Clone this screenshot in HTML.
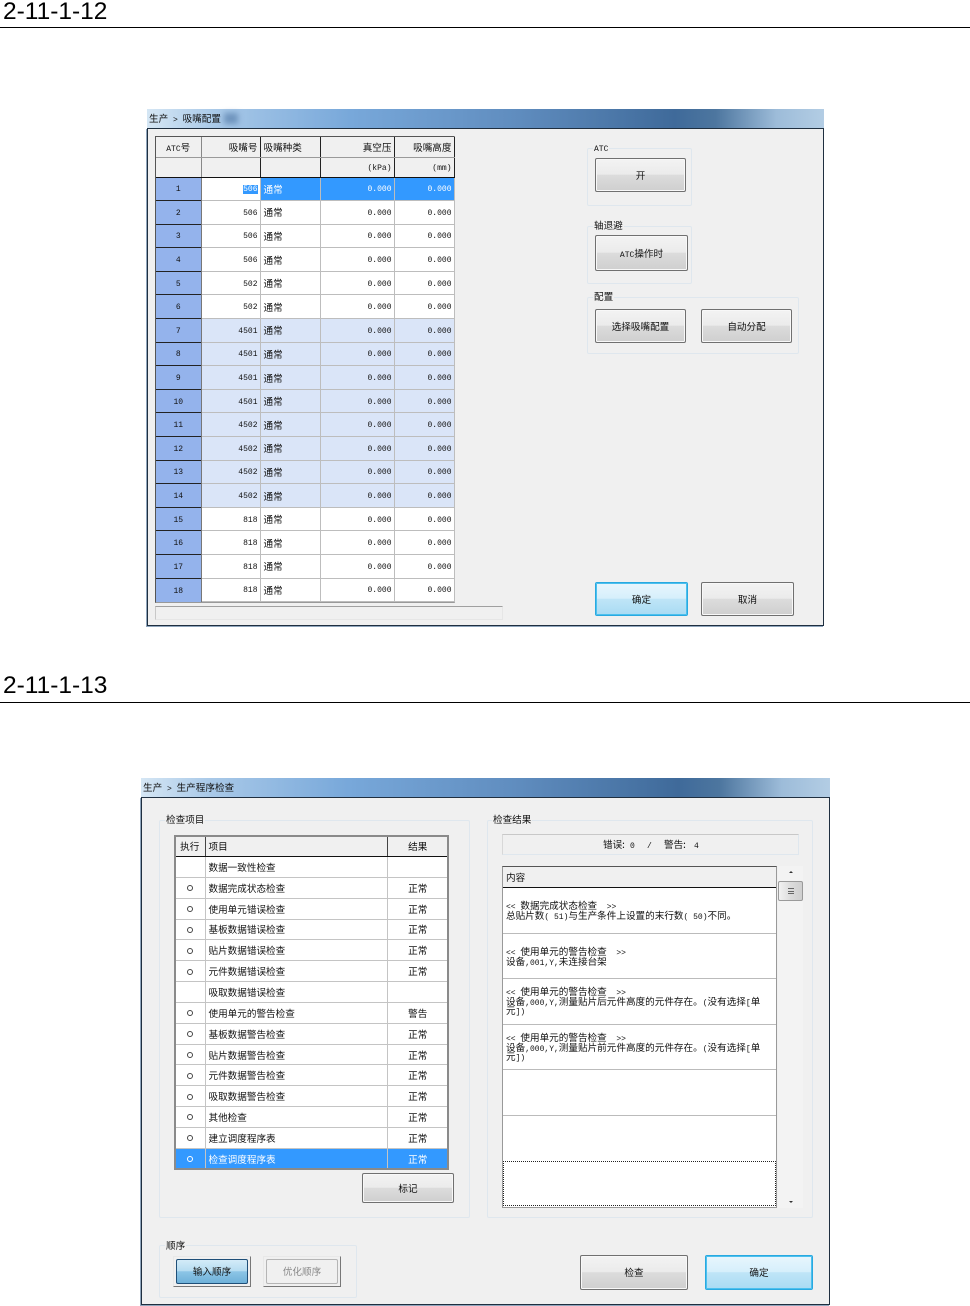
<!DOCTYPE html>
<html lang="zh">
<head>
<meta charset="utf-8">
<title>2-11-1</title>
<style>
html,body{margin:0;padding:0;background:#fff}
body{position:relative;width:970px;height:1306px;overflow:hidden;font-family:"Liberation Sans","Noto Sans CJK SC",sans-serif;color:#111}
.a{position:absolute;box-sizing:border-box}
.h{position:absolute;left:3px;font:24.5px/28px "Liberation Sans",sans-serif;color:#000}
.rule{position:absolute;left:0;width:970px;height:1px;background:#000}
.tb{position:absolute;box-sizing:border-box;background:linear-gradient(90deg,#d5e6f4 0,#a9c9e8 10%,#78a8da 30%,#5f8cbe 55%,#3f6a9a 78%,#4d769f 84%,#9dbcd9 93%,#b3cde4 100%)}
.win{position:absolute;box-sizing:border-box;background:#f0f0f0;border:1px solid #1f2f40;box-shadow:-1px 1px 0 #8fa5bc}
.t{position:absolute;white-space:nowrap;font-family:"Noto Sans CJK SC",sans-serif;font-size:9.6px;line-height:12px;color:#111}
.m{font-family:"Liberation Mono",monospace;font-size:8px;line-height:0}
.g{position:absolute;box-sizing:border-box;border:1px solid #dfe7ee;border-radius:2px}
.lb{position:absolute;background:#f0f0f0;padding:0 1px;white-space:nowrap;font-family:"Noto Sans CJK SC",sans-serif;font-size:9.6px;line-height:12px;color:#111}
.b{position:absolute;box-sizing:border-box;border:1px solid #707070;border-radius:2px;background:linear-gradient(#f3f3f3 0,#ebebeb 48%,#dcdcdc 50%,#cfcfcf 100%);text-align:center;font-family:"Noto Sans CJK SC",sans-serif;font-size:9.6px;color:#111;box-shadow:inset 0 0 0 1px #f8f8f8}
.bb{border:1px solid #29a9e0;background:linear-gradient(#e8f6fd 0,#d6effb 48%,#bfe5f7 50%,#a9dbf3 100%);box-shadow:inset 0 0 0 1px #4cc0ee}
table{position:absolute;border-collapse:collapse;table-layout:fixed;font-family:"Noto Sans CJK SC",sans-serif;font-size:9.6px;color:#111;background:#fff}
td{padding:0;overflow:hidden;white-space:nowrap;box-sizing:border-box;line-height:10px}
#t1{left:156px;top:137px;width:298px}
#t1 td{border-right:1px solid #bdbdbd;border-bottom:1px solid #bdbdbd}
#t1 tr.hd td{background:#f0f0f0;border-right:1px solid #222;border-bottom:1px solid #9a9a9a}
#t1 tr.hd2 td{background:#f0f0f0;border-right:1px solid #222;border-bottom:1px solid #111}
#t1 tr.hd td:first-child,#t1 tr.hd2 td:first-child{border-right:1px solid #888}
#t1 tr.r td{height:23.6px}
#t1 td.n{background:#94b3ec;text-align:center;border-right:1px solid #777;border-top:1px solid #222;border-bottom:0;font-family:"Liberation Mono",monospace;font-size:8px;padding-top:3px}
#t1 .rt{text-align:right;padding-right:2px}
#t1 .lf{padding-left:3px}
#t1 .v{font-family:"Liberation Mono",monospace;font-size:8px;padding-top:3px}
#t1 tr.s td:not(.n){background:#3399ff;color:#fff}
#t1 tr.s td.e{background:#fff;color:#fff}
#t1 tr.l td:not(.n){background:#dae5f8}
#t2{left:175px;top:836px;width:273px}
#t2 td{height:20.85px;border-right:1px solid #c4c4c4;border-bottom:1px solid #c4c4c4}
#t2 tr.hd td{height:20.5px;background:#f0f0f0;border-bottom:1px solid #111;border-right:1px solid #444}
#t2 td:nth-child(1){text-align:center}
#t2 td:nth-child(2){padding-left:3px}
#t2 td:nth-child(3){text-align:center;border-right:0}
#t2 tr.hd td:nth-child(3){border-right:0}
#t2 tr.s td{background:#3399ff;color:#fff}
.o{display:inline-block;width:6px;height:6px;border:1px solid #444;border-radius:50%;vertical-align:middle;box-sizing:border-box;position:relative;top:-1px}
tr.s .o{border-color:#fff}
</style>
</head>
<body>

<div class="h" style="top:-2px">2-11-1-12</div>
<div class="rule" style="top:27px"></div>

<div class="tb" style="left:147px;top:109px;width:677px;height:19px"></div>
<div class="t" style="left:149px;top:112px">生产<span class="m">&nbsp;&gt;&nbsp;</span>吸嘴配置</div>
<div class="a" style="left:224px;top:113px;width:14px;height:11px;background:#6f94bd;filter:blur(3px)"></div>
<div class="win" style="left:147px;top:128px;width:677px;height:498px"></div>

<div class="a" style="left:155px;top:136px;width:300px;height:467px;border:1px solid #555;border-right-color:#bbb;border-bottom-color:#999"></div>
<table id="t1">
<colgroup><col style="width:45px"><col style="width:59px"><col style="width:60px"><col style="width:74px"><col style="width:60px"></colgroup>
<tr class="hd" style="height:20px"><td style="text-align:center"><span class="m">ATC</span>号</td><td class="rt">吸嘴号</td><td class="lf">吸嘴种类</td><td class="rt">真空压</td><td class="rt">吸嘴高度</td></tr>
<tr class="hd2" style="height:20px"><td></td><td></td><td></td><td class="rt v">(kPa)</td><td class="rt v">(mm)</td></tr>
<tr class="r s"><td class="n">1</td><td class="rt v e"><span style="background:#3399ff">506</span></td><td class="lf">通常</td><td class="rt v">0.000</td><td class="rt v">0.000</td></tr>
<tr class="r"><td class="n">2</td><td class="rt v">506</td><td class="lf">通常</td><td class="rt v">0.000</td><td class="rt v">0.000</td></tr>
<tr class="r"><td class="n">3</td><td class="rt v">506</td><td class="lf">通常</td><td class="rt v">0.000</td><td class="rt v">0.000</td></tr>
<tr class="r"><td class="n">4</td><td class="rt v">506</td><td class="lf">通常</td><td class="rt v">0.000</td><td class="rt v">0.000</td></tr>
<tr class="r"><td class="n">5</td><td class="rt v">502</td><td class="lf">通常</td><td class="rt v">0.000</td><td class="rt v">0.000</td></tr>
<tr class="r"><td class="n">6</td><td class="rt v">502</td><td class="lf">通常</td><td class="rt v">0.000</td><td class="rt v">0.000</td></tr>
<tr class="r l"><td class="n">7</td><td class="rt v">4501</td><td class="lf">通常</td><td class="rt v">0.000</td><td class="rt v">0.000</td></tr>
<tr class="r l"><td class="n">8</td><td class="rt v">4501</td><td class="lf">通常</td><td class="rt v">0.000</td><td class="rt v">0.000</td></tr>
<tr class="r l"><td class="n">9</td><td class="rt v">4501</td><td class="lf">通常</td><td class="rt v">0.000</td><td class="rt v">0.000</td></tr>
<tr class="r l"><td class="n">10</td><td class="rt v">4501</td><td class="lf">通常</td><td class="rt v">0.000</td><td class="rt v">0.000</td></tr>
<tr class="r l"><td class="n">11</td><td class="rt v">4502</td><td class="lf">通常</td><td class="rt v">0.000</td><td class="rt v">0.000</td></tr>
<tr class="r l"><td class="n">12</td><td class="rt v">4502</td><td class="lf">通常</td><td class="rt v">0.000</td><td class="rt v">0.000</td></tr>
<tr class="r l"><td class="n">13</td><td class="rt v">4502</td><td class="lf">通常</td><td class="rt v">0.000</td><td class="rt v">0.000</td></tr>
<tr class="r l"><td class="n">14</td><td class="rt v">4502</td><td class="lf">通常</td><td class="rt v">0.000</td><td class="rt v">0.000</td></tr>
<tr class="r"><td class="n">15</td><td class="rt v">818</td><td class="lf">通常</td><td class="rt v">0.000</td><td class="rt v">0.000</td></tr>
<tr class="r"><td class="n">16</td><td class="rt v">818</td><td class="lf">通常</td><td class="rt v">0.000</td><td class="rt v">0.000</td></tr>
<tr class="r"><td class="n">17</td><td class="rt v">818</td><td class="lf">通常</td><td class="rt v">0.000</td><td class="rt v">0.000</td></tr>
<tr class="r"><td class="n">18</td><td class="rt v">818</td><td class="lf">通常</td><td class="rt v">0.000</td><td class="rt v">0.000</td></tr>
</table>
<div class="a" style="left:155px;top:606px;width:348px;height:14px;border:1px solid #e6e6e6;border-top-color:#a0a0a0;border-left-color:#c8c8c8"></div>

<div class="g" style="left:587px;top:148px;width:105px;height:58px"></div>
<div class="lb" style="left:593px;top:141px"><span class="m">ATC</span></div>
<div class="b" style="left:595px;top:158px;width:91px;height:34px;line-height:32px">开</div>
<div class="g" style="left:587px;top:226px;width:105px;height:58px"></div>
<div class="lb" style="left:593px;top:219px">轴退避</div>
<div class="b" style="left:595px;top:235px;width:93px;height:36px;line-height:34px"><span class="m">ATC</span>操作时</div>
<div class="g" style="left:587px;top:297px;width:212px;height:57px"></div>
<div class="lb" style="left:593px;top:290px">配置</div>
<div class="b" style="left:595px;top:309px;width:91px;height:34px;line-height:32px">选择吸嘴配置</div>
<div class="b" style="left:701px;top:309px;width:91px;height:34px;line-height:32px">自动分配</div>
<div class="b bb" style="left:595px;top:582px;width:93px;height:34px;line-height:32px">确定</div>
<div class="b" style="left:701px;top:582px;width:93px;height:34px;line-height:32px">取消</div>

<div class="h" style="top:672px">2-11-1-13</div>
<div class="rule" style="top:702px"></div>

<div class="tb" style="left:141px;top:778px;width:689px;height:19px"></div>
<div class="t" style="left:143px;top:781px">生产<span class="m">&nbsp;&gt;&nbsp;</span>生产程序检查</div>
<div class="win" style="left:141px;top:797px;width:689px;height:508px"></div>

<div class="g" style="left:159px;top:820px;width:311px;height:398px"></div>
<div class="lb" style="left:165px;top:813px">检查项目</div>
<div class="a" style="left:174px;top:835px;width:275px;height:335px;border:2px solid #8a8a8a;z-index:2;pointer-events:none"></div>
<table id="t2">
<colgroup><col style="width:30px"><col style="width:182px"><col style="width:61px"></colgroup>
<tr class="hd"><td>执行</td><td>项目</td><td>结果</td></tr>
<tr><td></td><td>数据一致性检查</td><td></td></tr>
<tr><td><span class="o"></span></td><td>数据完成状态检查</td><td>正常</td></tr>
<tr><td><span class="o"></span></td><td>使用单元错误检查</td><td>正常</td></tr>
<tr><td><span class="o"></span></td><td>基板数据错误检查</td><td>正常</td></tr>
<tr><td><span class="o"></span></td><td>贴片数据错误检查</td><td>正常</td></tr>
<tr><td><span class="o"></span></td><td>元件数据错误检查</td><td>正常</td></tr>
<tr><td></td><td>吸取数据错误检查</td><td></td></tr>
<tr><td><span class="o"></span></td><td>使用单元的警告检查</td><td>警告</td></tr>
<tr><td><span class="o"></span></td><td>基板数据警告检查</td><td>正常</td></tr>
<tr><td><span class="o"></span></td><td>贴片数据警告检查</td><td>正常</td></tr>
<tr><td><span class="o"></span></td><td>元件数据警告检查</td><td>正常</td></tr>
<tr><td><span class="o"></span></td><td>吸取数据警告检查</td><td>正常</td></tr>
<tr><td><span class="o"></span></td><td>其他检查</td><td>正常</td></tr>
<tr><td><span class="o"></span></td><td>建立调度程序表</td><td>正常</td></tr>
<tr class="s"><td><span class="o"></span></td><td>检查调度程序表</td><td>正常</td></tr>
</table>
<div class="b" style="left:362px;top:1173px;width:92px;height:30px;line-height:28px">标记</div>

<div class="g" style="left:487px;top:820px;width:326px;height:398px"></div>
<div class="lb" style="left:492px;top:813px">检查结果</div>
<div class="a" style="left:502px;top:834px;width:297px;height:21px;border:1px solid #dfe7ee;border-top-color:#c8c8c8;border-left-color:#d8d8d8"></div>
<div class="t" style="left:603px;top:838px">错误:</div>
<div class="t" style="left:630px;top:838px"><span class="m">0</span></div>
<div class="t" style="left:647px;top:838px"><span class="m">/</span></div>
<div class="t" style="left:664px;top:838px">警告:</div>
<div class="t" style="left:694px;top:838px"><span class="m">4</span></div>

<div class="a" style="left:502px;top:866px;width:275px;height:342px;background:#fff;border:1px solid #999;border-top-color:#555"></div>
<div class="a" style="left:503px;top:867px;width:273px;height:21px;background:#f0f0f0;border-bottom:1px solid #111"></div>
<div class="t" style="left:506px;top:871px">内容</div>
<div class="a" style="left:503px;top:933px;width:273px;height:1px;background:#bbb"></div>
<div class="a" style="left:503px;top:978px;width:273px;height:1px;background:#bbb"></div>
<div class="a" style="left:503px;top:1024px;width:273px;height:1px;background:#bbb"></div>
<div class="a" style="left:503px;top:1069px;width:273px;height:1px;background:#bbb"></div>
<div class="a" style="left:503px;top:1115px;width:273px;height:1px;background:#bbb"></div>
<div class="a" style="left:503px;top:1161px;width:273px;height:45px;border:1px dotted #222"></div>

<div class="t" style="left:506px;top:901px;line-height:9.5px"><span class="m">&lt;&lt;&nbsp;</span>数据完成状态检查<span class="m">&nbsp;&nbsp;&gt;&gt;</span><br>总贴片数<span class="m">( 51)</span>与生产条件上设置的末行数<span class="m">( 50)</span>不同。</div>
<div class="t" style="left:506px;top:947px;line-height:9.5px"><span class="m">&lt;&lt;&nbsp;</span>使用单元的警告检查<span class="m">&nbsp;&nbsp;&gt;&gt;</span><br>设备<span class="m">,001,Y,</span>未连接台架</div>
<div class="t" style="left:506px;top:987px;line-height:9.5px"><span class="m">&lt;&lt;&nbsp;</span>使用单元的警告检查<span class="m">&nbsp;&nbsp;&gt;&gt;</span><br>设备<span class="m">,000,Y,</span>测量贴片后元件高度的元件存在。<span class="m">(</span>没有选择<span class="m">[</span>单<br>元<span class="m">])</span></div>
<div class="t" style="left:506px;top:1033px;line-height:9.5px"><span class="m">&lt;&lt;&nbsp;</span>使用单元的警告检查<span class="m">&nbsp;&nbsp;&gt;&gt;</span><br>设备<span class="m">,000,Y,</span>测量贴片前元件高度的元件存在。<span class="m">(</span>没有选择<span class="m">[</span>单<br>元<span class="m">])</span></div>

<div class="a" style="left:778px;top:866px;width:25px;height:342px;background:#f3f3f3"></div>
<div class="a" style="left:789px;top:871px;width:0;height:0;border-left:2.5px solid transparent;border-right:2.5px solid transparent;border-bottom:2.5px solid #333"></div>
<div class="a" style="left:778px;top:881px;width:25px;height:20px;border:1px solid #9a9a9a;border-radius:2px;background:linear-gradient(90deg,#f2f2f2,#dcdcdc 50%,#cfcfcf)"></div>
<div class="a" style="left:788px;top:888px;width:6px;height:6px;border-top:1px solid #666;border-bottom:1px solid #666;background:linear-gradient(#666,#666) center/100% 1px no-repeat"></div>
<div class="a" style="left:789px;top:1201px;width:0;height:0;border-left:2.5px solid transparent;border-right:2.5px solid transparent;border-top:2.5px solid #333"></div>

<div class="g" style="left:159px;top:1245px;width:198px;height:53px"></div>
<div class="lb" style="left:165px;top:1239px">顺序</div>
<div class="a" style="left:173px;top:1256px;width:78px;height:31px;background:#f0f0f0;border:1px solid;border-color:#e8e8e8 #777 #777 #e8e8e8"></div>
<div class="b" style="left:176px;top:1259px;width:72px;height:25px;line-height:23px;border-color:#1f4f78;background:linear-gradient(#d3ebf8 0,#b5dcf1 48%,#8cc5e6 50%,#6fb1d9 100%);box-shadow:none">输入顺序</div>
<div class="a" style="left:263px;top:1256px;width:78px;height:31px;background:#f0f0f0;border:1px solid;border-color:#e8e8e8 #777 #777 #e8e8e8"></div>
<div class="b" style="left:266px;top:1259px;width:72px;height:25px;line-height:23px;border-color:#b5b5b5;background:#f0f0f0;color:#8a8a8a;box-shadow:none">优化顺序</div>
<div class="b" style="left:580px;top:1255px;width:108px;height:35px;line-height:33px">检查</div>
<div class="b bb" style="left:705px;top:1255px;width:108px;height:35px;line-height:33px">确定</div>

</body>
</html>
